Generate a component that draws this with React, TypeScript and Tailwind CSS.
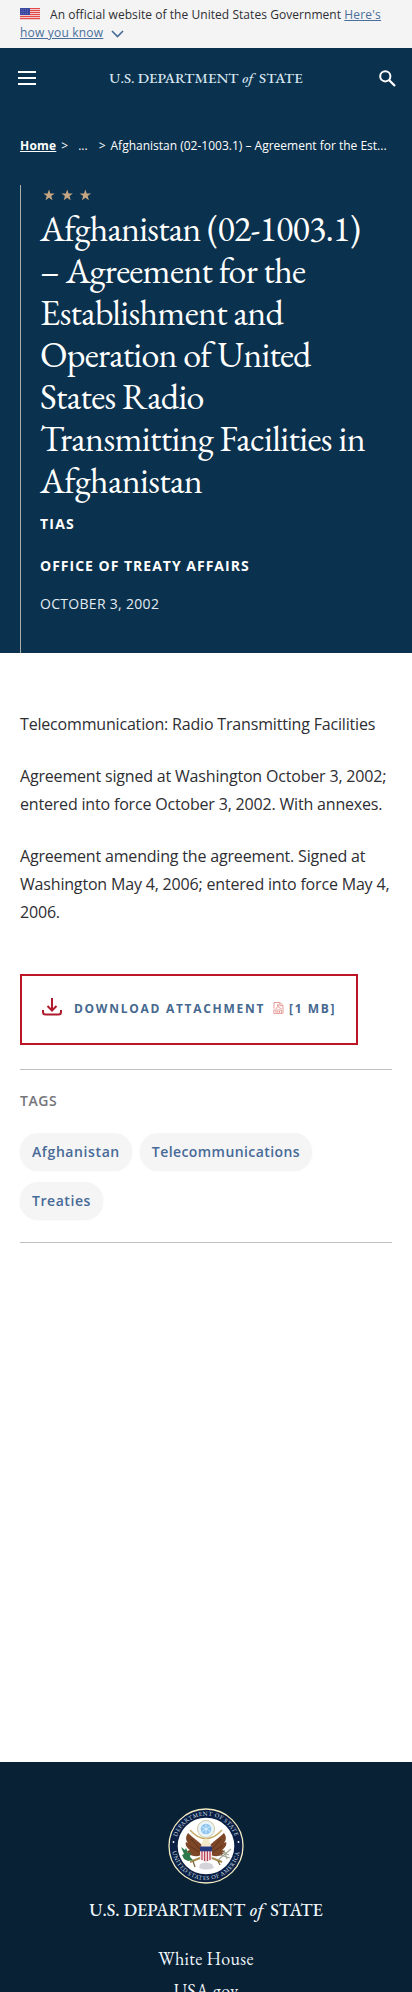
import React from "react";

const serif = "font-['EB_Garamond','Liberation_Serif',serif]";

const titleLines = [
  { text: "Afghanistan (02-1003.1)", tracking: "tracking-[-0.78px]" },
  { text: "– Agreement for the", tracking: "tracking-[-0.68px]" },
  { text: "Establishment and", tracking: "tracking-[-0.66px]" },
  { text: "Operation of United", tracking: "tracking-[-0.76px]" },
  { text: "States Radio", tracking: "tracking-[-0.64px]" },
  { text: "Transmitting Facilities in", tracking: "tracking-[-0.62px]" },
  { text: "Afghanistan", tracking: "tracking-[-0.64px]" },
];

function Flag() {
  return (
    <svg className="mr-[10px] inline-block h-[12px] w-[20px] align-[-1px]" viewBox="0 0 20 12">
      <rect width="20" height="12" fill="#f5dede" />
      {[0, 2, 4, 6, 8, 10].map((y) => (
        <rect key={y} y={y} width="20" height="1.15" fill="#e04a4a" />
      ))}
      <rect width="10" height="7" fill="#3a46a0" />
      {[1.5, 3.5, 5.5].map((y) =>
        [1.5, 3.5, 5.5, 7.5].map((x) => <circle key={`${x}-${y}`} cx={x} cy={y} r="0.35" fill="#c8cdf0" />)
      )}
    </svg>
  );
}

function Wordmark({ className }: { className: string }) {
  return (
    <span className={`${serif} font-medium whitespace-nowrap ${className}`}>
      U.S. DEPARTMENT <em className="mr-[0.17em] ml-[0.04em]">of</em> STATE
    </span>
  );
}

function Stars() {
  return (
    <svg className="ml-[3px] block h-[12px] w-[50px]" viewBox="0 0 50 12" fill="#c5a582">
      {[0, 18.2, 36.4].map((x) => (
        <path
          key={x}
          transform={`translate(${x} 0)`}
          d="M6 0.4 7.4 4.4H11.7L8.3 7 9.5 11.2 6 8.8 2.5 11.2 3.7 7 0.3 4.4H4.6Z"
        />
      ))}
    </svg>
  );
}

function Seal() {
  return (
    <svg className="block h-[76px] w-[76px] shrink-0" viewBox="0 0 76 76">
      <defs>
        <path id="arcTop" d="M7.6 38A30.4 30.4 0 0 1 68.4 38" />
        <path id="arcBottom" d="M4 38A34 34 0 0 0 72 38" />
      </defs>
      <circle cx="38" cy="38" r="37" fill="#0b1f45" stroke="#f3ecc0" strokeWidth="1.3" />
      <circle cx="38" cy="38" r="28.3" fill="#fff" />
      <text className={serif} fontSize="6" fill="#dfe5f0" textAnchor="middle" letterSpacing="0.5">
        <textPath href="#arcTop" startOffset="50%">DEPARTMENT OF STATE</textPath>
      </text>
      <text className={serif} fontSize="6" fill="#dfe5f0" textAnchor="middle" letterSpacing="0.55">
        <textPath href="#arcBottom" startOffset="50%">UNITED STATES OF AMERICA</textPath>
      </text>
      <circle cx="5.5" cy="34" r="0.9" fill="#fff" />
      <circle cx="70.5" cy="34" r="0.9" fill="#fff" />
      <circle cx="38" cy="21" r="8.5" fill="#e9f4fb" stroke="#cfc9a0" strokeWidth="1" />
      <circle cx="38" cy="21" r="5.3" fill="#8cc4ee" />
      <path d="M38 16.5V25.5M34 18.8 42 23.2M34 23.2 42 18.8" stroke="#e6f5ff" strokeWidth="0.8" />
      <path d="M22 22Q29 30 38 31Q47 30 54 22" fill="none" stroke="#c7ad68" strokeWidth="1.5" />
      <path
        d="M20 25C24 29 30 33 34 37L33 47C27 50 20 47 19 43L22 42C18 39 17 36 18 34L20 35C17 31 18 28 20 25Z M56 25C52 29 46 33 42 37L43 47C49 50 56 47 57 43L54 42C58 39 59 36 58 34L56 35C59 31 58 28 56 25Z"
        fill="#7d4626"
      />
      <path d="M23 31 32 41M22 38 31 44M53 31 44 41M54 38 45 44" stroke="#52301e" strokeWidth="0.8" />
      <path d="M35 32Q38 29 41 32L43 38H33Z" fill="#f2e9c8" />
      <path d="M32 38.5H44V50Q43 53 38 54Q33 53 32 50Z" fill="#f3dfe3" />
      <path d="M34 43V52M36.6 43V53M39.4 43V53M42 43V52" stroke="#b94357" strokeWidth="1.2" />
      <rect x="32" y="38.5" width="12" height="4.8" fill="#26397d" />
      <path d="M32 50 22 54M44 50 54 54" stroke="#a98a4e" strokeWidth="2" />
      <path
        d="M13 39 17 42 18 40 20 45 23 44 22 49 25 52 20 53 16 51 14 47 16 46Z"
        fill="#2c7a4b"
      />
      <path d="M50 52 63 41M52 47 62 50M54 44 61 47M56 42 59 51" stroke="#a4a694" strokeWidth="1.1" />
      <path d="M25 53 27 59M50 53 52 57" stroke="#7c6840" strokeWidth="1.3" />
      <path d="M32 56Q38 53 44 56L46 60Q38 63 31 60Z" fill="#d4d3da" />
    </svg>
  );
}

function Tag({ children, tracking = "tracking-[0.42px]" }: { children: string; tracking?: string }) {
  return (
    <li
      className={`flex h-[37px] items-center rounded-[18px] bg-[#f5f5f6] px-3 text-[14px] font-semibold text-[#476a96] shadow-[0_1px_2px_rgba(0,0,0,0.06)] ${tracking}`}
    >
      {children}
    </li>
  );
}

export default function App() {
  return (
    <div className="flex h-[1992px] w-[412px] flex-col overflow-hidden bg-white font-['Open_Sans','Noto_Sans',sans-serif] text-[#2e2e33]">
      <div className="h-[48px] bg-[#f4f4f4] px-5 pt-[6px] text-[12px] leading-[18px]">
        <p className="tracking-[0.05px] whitespace-nowrap">
          <Flag />
          An official website of the United States Government{" "}
          <a className="tracking-[0.2px] text-[#4a6f9c] underline">
            Here's
            <br />
            how you know
          </a>
          <svg className="ml-[8px] inline-block h-[8px] w-[13px] align-[-1px]" viewBox="0 0 13 8" fill="none" stroke="#456a94" strokeWidth="1.6">
            <path d="M1 1 6.5 6.5 12 1" />
          </svg>
        </p>
      </div>

      <div className="h-[605px] bg-[#0a314d] text-white">
        <header className="flex h-[60px] items-center justify-between pr-4 pl-[18px]">
          <div className="flex h-[14px] w-[18px] flex-col justify-between">
            <span className="h-[2px] bg-white" />
            <span className="h-[2px] bg-white" />
            <span className="h-[2px] bg-white" />
          </div>
          <Wordmark className="mr-[3px] text-[14.9px] text-[#d8e6f0]" />
          <svg className="h-[17px] w-[17px]" viewBox="0 0 17 17" fill="none" stroke="#fff" strokeWidth="2">
            <circle cx="6.3" cy="6.3" r="5.1" />
            <path d="M10 10 16 16" strokeWidth="2.3" />
          </svg>
        </header>

        <nav className="mt-[28px] flex h-[20px] items-center px-5 text-[12px] whitespace-nowrap">
          <a className="font-bold tracking-[0.2px] underline">Home</a>
          <span className="ml-[5px]">&gt;</span>
          <span className="ml-[10px]">...</span>
          <span className="ml-[11px]">&gt;</span>
          <span className="ml-[5px]">Afghanistan (02-1003.1) – Agreement for the Est...</span>
        </nav>

        <div className="mt-[29px] ml-5 h-[468px] border-l border-[#a9b0a8] pt-[4px] pl-[19px]">
          <Stars />
          <h1 className={`mt-[7px] text-[36px] leading-[42px] ${serif}`}>
            {titleLines.map((line, i) => (
              <span key={i} className={`block whitespace-nowrap ${line.tracking}`}>
                {line.text}
              </span>
            ))}
          </h1>
          <p className="mt-[12px] text-[14px] leading-[20px] font-bold tracking-[1.2px]">TIAS</p>
          <p className="mt-[22px] text-[14px] leading-[20px] font-bold tracking-[1px]">OFFICE OF TREATY AFFAIRS</p>
          <p className="mt-[18px] text-[14px] leading-[20px] tracking-[0.3px] text-[#e3ebf2]">OCTOBER 3, 2002</p>
        </div>
      </div>

      <main className="h-[1109px] px-5 pt-[57px]">
        <div className="flex flex-col gap-6 text-[16px] leading-[28px] tracking-[-0.18px] whitespace-nowrap">
          <p>Telecommunication: Radio Transmitting Facilities</p>
          <p>
            Agreement signed at Washington October 3, 2002;
            <br />
            entered into force October 3, 2002. With annexes.
          </p>
          <p>
            Agreement amending the agreement. Signed at
            <br />
            Washington May 4, 2006; entered into force May 4,
            <br />
            2006.
          </p>
        </div>

        <a className="mt-[48px] flex h-[71px] w-[338px] items-center border-2 border-[#bb1526] pb-[1px] pl-[20px] text-[12px] font-bold whitespace-nowrap text-[#45688f]">
          <svg className="-mt-[4px] h-[18px] w-[20px]" viewBox="0 0 20 18" fill="none" stroke="#b01c2e" strokeWidth="2">
            <path d="M10 0V12M5.5 8 10 12.5 14.5 8M1 12V14Q1 16.5 3.5 16.5H16.5Q19 16.5 19 14V12" />
          </svg>
          <span className="ml-3 tracking-[1.72px]">DOWNLOAD ATTACHMENT</span>
          <svg className="-mt-[3px] ml-[8px] h-[12px] w-[11px]" viewBox="0 0 11 12" fill="none" stroke="#e0857f" strokeWidth="0.8">
            <path d="M1 6.5V0.5H6.8L10 3.6V11.5H9.3M6.8 0.5V3.6H10M2.6 7.2Q5.2 5 4.9 2.3Q5.2 6.6 8.6 6.4" />
            <path d="M2.5 11.5H0.8V8H8.6V11.5Z" />
            <path d="M3 9V10.6M4.8 9V10.6M6.6 9V10.6" strokeWidth="1" />
          </svg>
          <span className="ml-[5px] tracking-[1.6px]">[1 MB]</span>
        </a>

        <section className="mt-[24px] h-[174px] border-y border-[#bfbfc0] pt-[21px]">
          <h2 className="text-[14px] leading-[20px] font-semibold tracking-[0.6px] text-[#75757a]">TAGS</h2>
          <ul className="mt-[22px] flex flex-wrap gap-x-2 gap-y-3">
            <Tag tracking="tracking-[0.6px]">Afghanistan</Tag>
            <Tag>Telecommunications</Tag>
            <Tag tracking="tracking-[0.55px]">Treaties</Tag>
          </ul>
        </section>
      </main>

      <footer className="flex h-[230px] flex-col items-center bg-[#082135] pt-[46px] text-[#eef6fb]">
        <Seal />
        <Wordmark className="mt-[12px] shrink-0 text-[18px] leading-[28px]" />
        <a className={`mt-[19px] shrink-0 text-[18px] leading-[32px] tracking-[0.3px] ${serif}`}>White House</a>
        <a className={`shrink-0 text-[18px] leading-[32px] tracking-[0.3px] ${serif}`}>USA.gov</a>
      </footer>
    </div>
  );
}
